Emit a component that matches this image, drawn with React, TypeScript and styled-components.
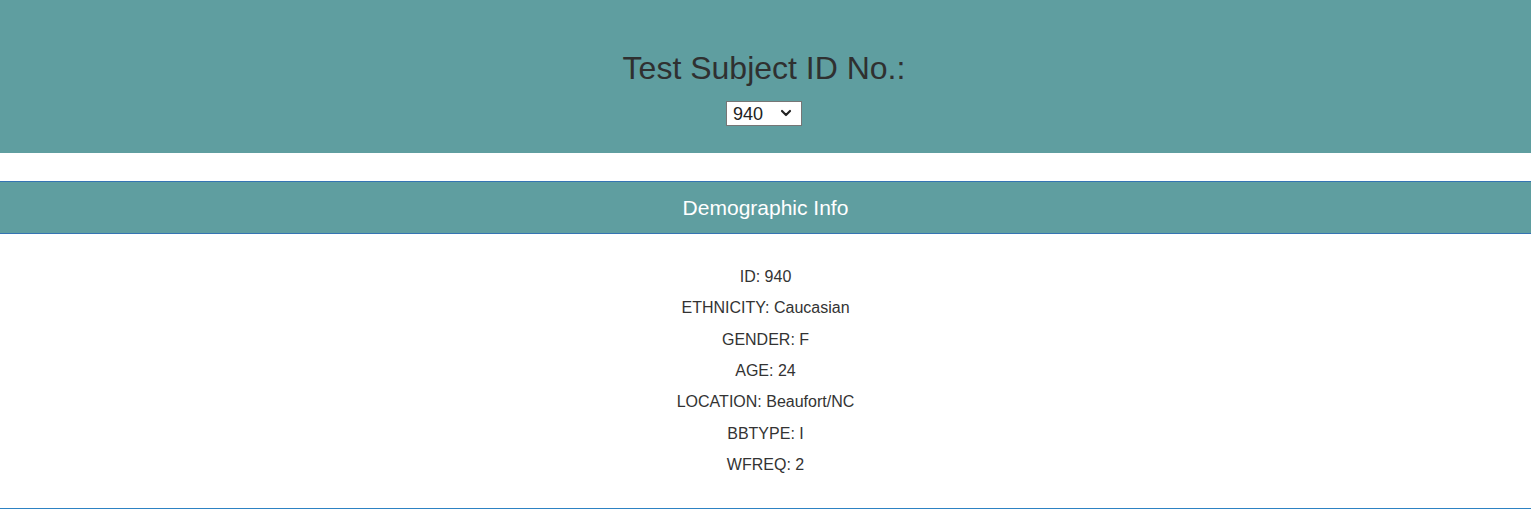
import styled, { createGlobalStyle } from "styled-components";
import { ChevronDown } from "lucide-react";

const subject = {
  id: 940,
  ethnicity: "Caucasian",
  gender: "F",
  age: 24,
  location: "Beaufort/NC",
  bbtype: "I",
  wfreq: 2,
};

const App = () => (
  <>
    <GlobalStyle />
    <Header>
      <Title>Test Subject ID No.:</Title>
      <SelectWrap>
        <SubjectSelect defaultValue={String(subject.id)}>
          <option value="940">940</option>
          <option value="941">941</option>
          <option value="943">943</option>
        </SubjectSelect>
        <Arrow>
          <ChevronDown size={16} strokeWidth={3.2} />
        </Arrow>
      </SelectWrap>
    </Header>

    <Panel>
      <PanelHeading>Demographic Info</PanelHeading>
      <PanelBody>
        {Object.entries(subject).map(([key, value]) => (
          <InfoLine key={key}>
            {key.toUpperCase()}: {value}
          </InfoLine>
        ))}
      </PanelBody>
    </Panel>
  </>
);

export default App;

const GlobalStyle = createGlobalStyle`
  body {
    margin: 0;
    background: #ffffff;
    font-family: "Liberation Sans", Arial, sans-serif;
    color: #333333;
  }
`;

const Header = styled.header`
  display: flex;
  flex-direction: column;
  align-items: center;
  height: 153px;
  box-sizing: border-box;
  padding: 51px 3px 0 0;
  background: #5f9ea0;
`;

const Title = styled.h1`
  margin: 0 0 15px;
  font-size: 32px;
  font-weight: 400;
  line-height: 35px;
  color: #2f3030;
`;

const SelectWrap = styled.div`
  position: relative;
  width: 76px;
  height: 25px;
`;

const SubjectSelect = styled.select`
  appearance: none;
  width: 100%;
  height: 100%;
  box-sizing: border-box;
  padding: 0 0 0 6px;
  border: 1px solid #767676;
  border-radius: 0;
  background: #ffffff;
  font-family: "Liberation Sans", Arial, sans-serif;
  font-size: 18px;
  color: #222222;
`;

const Arrow = styled.span`
  position: absolute;
  top: 4px;
  right: 8px;
  display: flex;
  color: #222222;
  pointer-events: none;
`;

const Panel = styled.section`
  margin-top: 28px;
  border-top: 1px solid #3574b3;
  border-bottom: 1px solid #2d82c3;
`;

const PanelHeading = styled.h2`
  margin: 0;
  padding: 14px 0;
  line-height: 23px;
  font-size: 21px;
  font-weight: 400;
  text-align: center;
  color: #ffffff;
  background: #5f9ea0;
  border-bottom: 1px solid #3574b3;
`;

const PanelBody = styled.div`
  display: flex;
  flex-direction: column;
  align-items: center;
  padding: 32px 0 23px;
`;

const InfoLine = styled.p`
  margin: 0 0 10px;
  font-size: 16px;
  line-height: 21.33px;
  color: #333333;
`;
